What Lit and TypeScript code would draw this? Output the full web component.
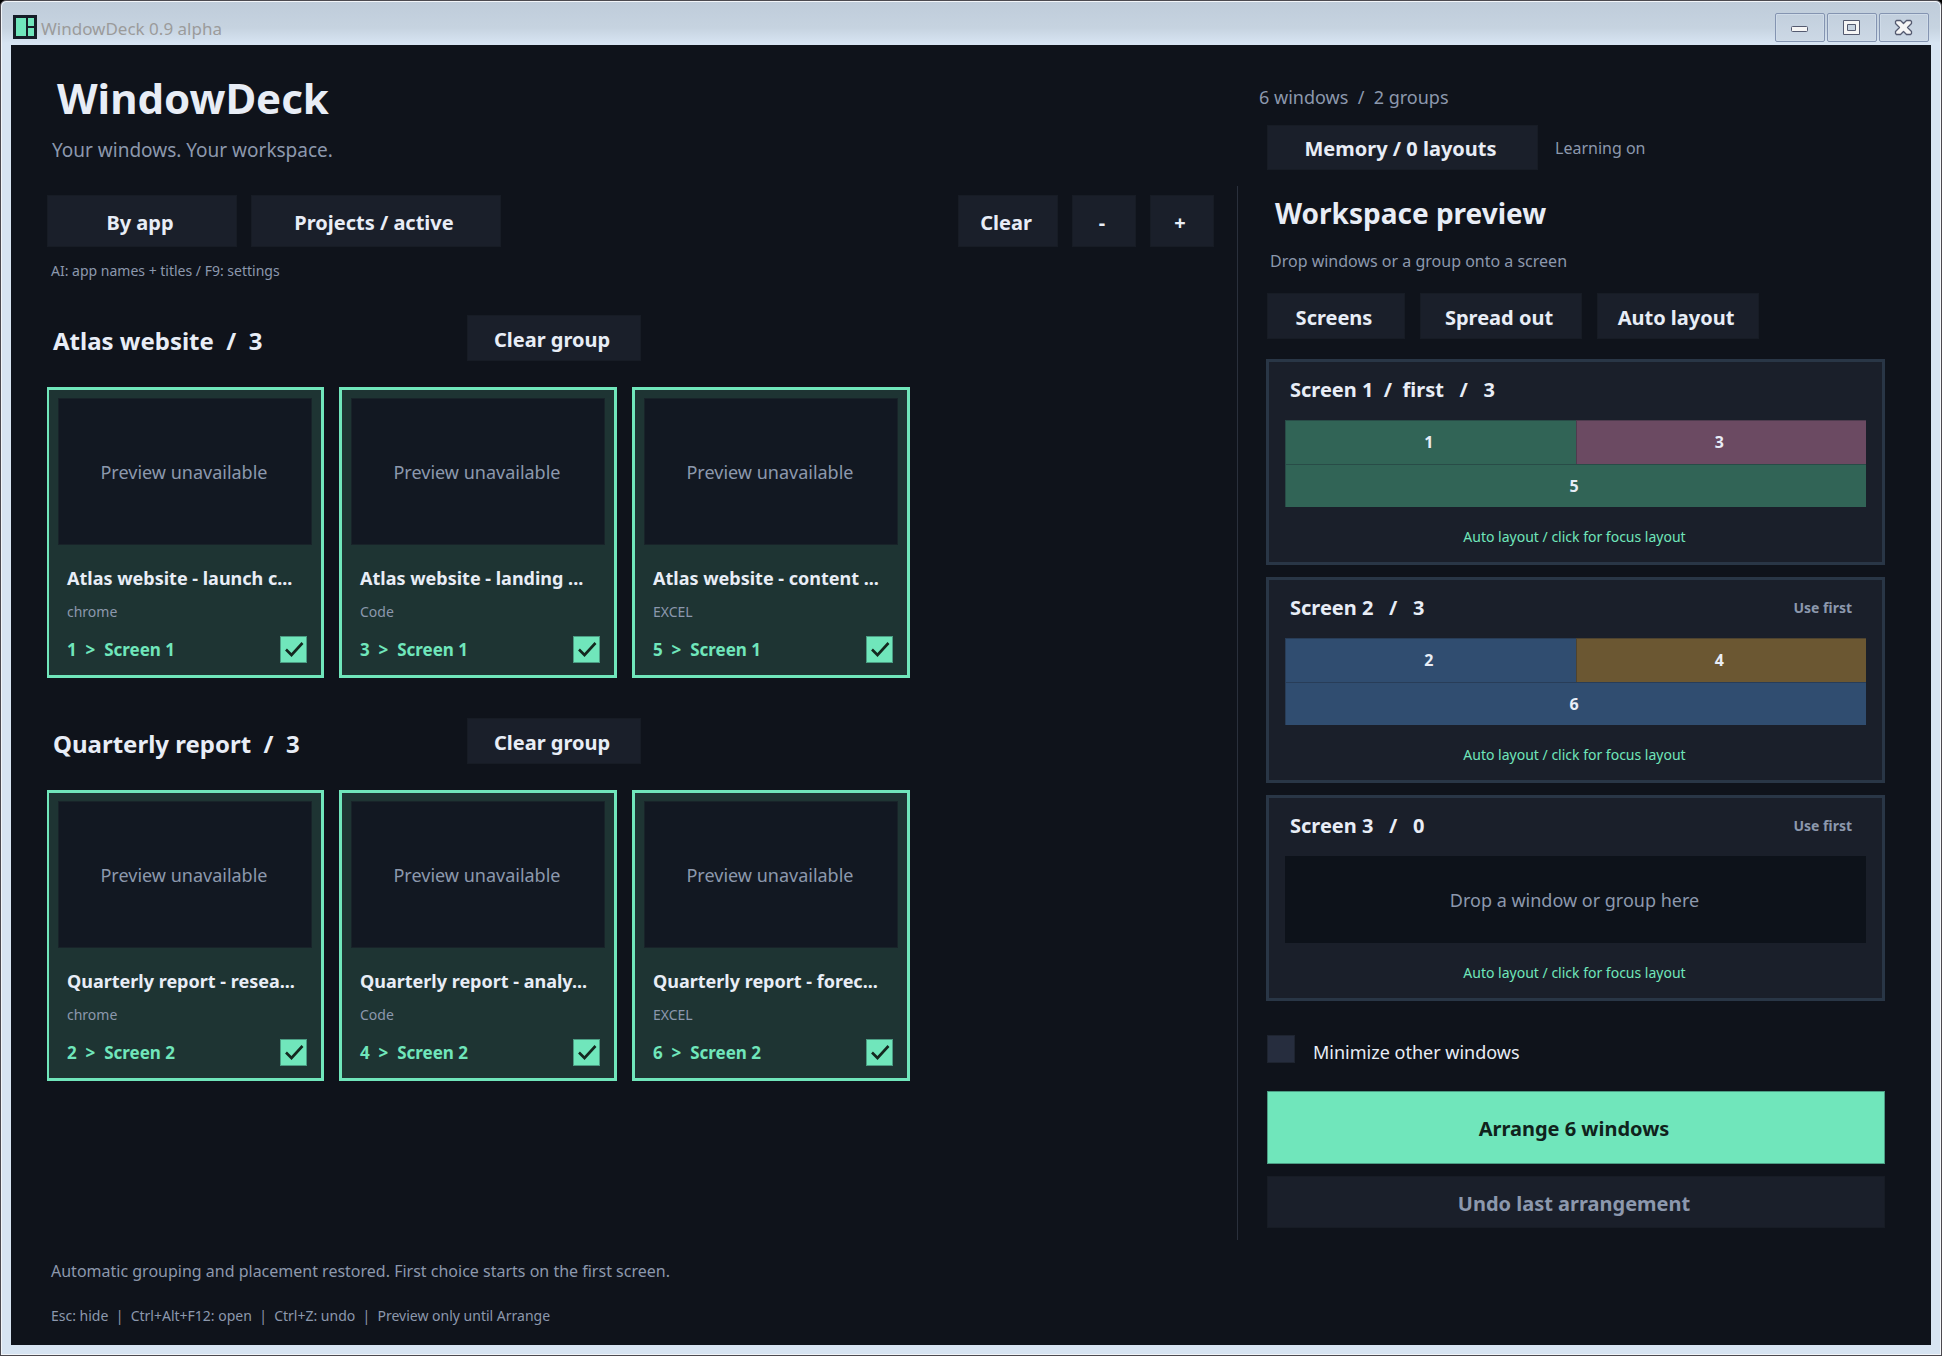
import { LitElement, html, css, nothing } from "lit";
import { customElement, property } from "lit/decorators.js";
import { classMap } from "lit/directives/class-map.js";

interface WindowCard {
  title: string;
  app: string;
  slot: number;
}

interface WindowGroup {
  name: string;
  screen: string;
  windows: WindowCard[];
}

interface Tile {
  slot: number;
  tone: "green" | "plum" | "blue" | "amber";
  wide?: boolean;
}

interface ScreenInfo {
  label: string;
  first: boolean;
  tiles: Tile[];
}

const GROUPS: WindowGroup[] = [
  {
    name: "Atlas website",
    screen: "Screen 1",
    windows: [
      { title: "Atlas website - launch c...", app: "chrome", slot: 1 },
      { title: "Atlas website - landing ...", app: "Code", slot: 3 },
      { title: "Atlas website - content ...", app: "EXCEL", slot: 5 },
    ],
  },
  {
    name: "Quarterly report",
    screen: "Screen 2",
    windows: [
      { title: "Quarterly report - resea...", app: "chrome", slot: 2 },
      { title: "Quarterly report - analy...", app: "Code", slot: 4 },
      { title: "Quarterly report - forec...", app: "EXCEL", slot: 6 },
    ],
  },
];

const SCREENS: ScreenInfo[] = [
  {
    label: "Screen 1  /  first   /   3",
    first: true,
    tiles: [
      { slot: 1, tone: "green" },
      { slot: 3, tone: "plum" },
      { slot: 5, tone: "green", wide: true },
    ],
  },
  {
    label: "Screen 2   /   3",
    first: false,
    tiles: [
      { slot: 2, tone: "blue" },
      { slot: 4, tone: "amber" },
      { slot: 6, tone: "blue", wide: true },
    ],
  },
  { label: "Screen 3   /   0", first: false, tiles: [] },
];

const controls = css`
  * {
    box-sizing: border-box;
  }
  h1,
  h2,
  h3,
  p {
    margin: 0;
  }
  button {
    margin: 0;
    border: 0;
    border-radius: 0;
    background: none;
    color: inherit;
    font: inherit;
    cursor: pointer;
  }
  .btn {
    padding: 3px 4px 0 0;
    border: 1px solid #171c25;
    background: #1a1f2a;
    color: #e8edf6;
    font-size: 20px;
    font-weight: 700;
    line-height: 28px;
    white-space: nowrap;
  }
  input[type="checkbox"] {
    appearance: none;
    margin: 0;
    border-radius: 0;
  }
`;

@customElement("title-bar")
export class TitleBar extends LitElement {
  static styles = [
    controls,
    css`
      :host {
        display: flex;
        align-items: flex-start;
        justify-content: space-between;
        height: 43px;
        padding: 11px 11px 0 11px;
        background: linear-gradient(#bfccda, #c6d3e0 60%, #d7e4f2 96%);
      }
      .brand {
        display: flex;
        align-items: center;
        gap: 4px;
        padding-top: 2px;
        color: #9b9b9b;
        font-size: 17px;
        line-height: 24px;
      }
      .logo {
        display: block;
        width: 24px;
        height: 24px;
      }
      .caption {
        padding-top: 3px;
        line-height: 21px;
      }
      .controls {
        display: flex;
        gap: 2px;
      }
      .control {
        display: grid;
        place-items: center;
        width: 50px;
        height: 29px;
        padding: 0;
        border: 1px solid #8494b1;
        border-radius: 2px;
        box-shadow: inset 0 0 0 1px #cfdbe8;
        background: linear-gradient(#c2cfdd, #ccd8e5);
      }
      .control svg {
        display: block;
        width: 20px;
        height: 18px;
      }
    `,
  ];

  render() {
    return html`
      <div class="brand">
        <svg class="logo" viewBox="0 0 24 24" aria-hidden="true">
          <rect width="24" height="24" fill="#151d27" />
          <path fill="#70e6bb" d="M3 3h10v18H3zM15 3h6v8h-6zM15 13h6v8h-6z" />
        </svg>
        <span class="caption">WindowDeck 0.9 alpha</span>
      </div>
      <div class="controls">
        <button class="control" aria-label="Minimize">
          <svg viewBox="0 0 20 18">
            <rect x="1.5" y="7.5" width="16" height="5" rx="1" fill="#f5f5f5" stroke="#545a70" />
          </svg>
        </button>
        <button class="control" aria-label="Maximize">
          <svg viewBox="0 0 20 18">
            <path
              fill="#f5f5f5"
              stroke="#545a70"
              fill-rule="evenodd"
              d="M1.5 1.500h16v14h-16zM5.500 5.500h8v6h-8z"
            />
          </svg>
        </button>
        <button class="control" aria-label="Close">
          <svg viewBox="0 0 20 18">
            <path
              fill="#f5f5f5"
              stroke="#545a70"
              stroke-width="1.300"
              stroke-linejoin="round"
              d="M2.500 1.500H6.500L9.500 4.500 12.500 1.500H16.500L17.500 2.500V4.500L13.500 8.500 17.500 12.500V14.500L16.500 15.500H12.500L9.500 12.500 6.500 15.500H2.500L1.500 14.500V12.500L5.500 8.500 1.500 4.500V2.500Z"
            />
          </svg>
        </button>
      </div>
    `;
  }
}

@customElement("window-card")
export class WindowCardElement extends LitElement {
  @property({ attribute: false }) item!: WindowCard;
  @property() screen = "";

  static styles = [
    controls,
    css`
      :host {
        display: block;
        flex: 0 0 278px;
        padding: 8px 9px 12px;
        border: 3px solid #70e6bb;
        background: #1e3433;
      }
      .preview {
        display: grid;
        place-items: center;
        height: 147px;
        padding-right: 2px;
        border: 1px solid #182329;
        background: #121822;
        color: #8c98ad;
        font-size: 18px;
        line-height: 24px;
      }
      .body {
        padding: 21px 5px 0 9px;
      }
      .title {
        color: #e8edf6;
        font-size: 18px;
        font-weight: 700;
        line-height: 24px;
        white-space: nowrap;
      }
      .app {
        padding-top: 12px;
        color: #8c98ad;
        font-size: 14px;
        line-height: 20px;
      }
      .target {
        display: flex;
        align-items: center;
        justify-content: space-between;
        padding-top: 14px;
        color: #70e6bb;
        font-size: 17px;
        font-weight: 700;
        line-height: 24px;
        white-space: pre;
      }
      .tick {
        display: grid;
      }
      .tick > * {
        grid-area: 1 / 1;
        width: 27px;
        height: 27px;
      }
      .tick input {
        border: 1px solid #4b9c83;
        background: #1e3433;
      }
      .tick input:checked {
        background: #70e6bb;
      }
      .tick svg {
        visibility: hidden;
        pointer-events: none;
      }
      .tick input:checked + svg {
        visibility: visible;
      }
    `,
  ];

  render() {
    const { title, app, slot } = this.item;
    return html`
      <div class="preview">Preview unavailable</div>
      <div class="body">
        <h3 class="title">${title}</h3>
        <p class="app">${app}</p>
        <div class="target">
          <label for="pick">${slot + "  >  " + this.screen}</label>
          <span class="tick">
            <input id="pick" type="checkbox" checked />
            <svg viewBox="0 0 27 27" aria-hidden="true">
              <path d="M6 13.500 11.500 19 22.500 7" fill="none" stroke="#14281f" stroke-width="2.600" />
            </svg>
          </span>
        </div>
      </div>
    `;
  }
}

@customElement("screen-panel")
export class ScreenPanel extends LitElement {
  @property({ attribute: false }) info!: ScreenInfo;

  static styles = [
    controls,
    css`
      :host {
        display: block;
        padding: 14px 16px 15px;
        border: 3px solid #293646;
        background: #1a1f2a;
      }
      .head {
        display: flex;
        align-items: center;
        justify-content: space-between;
        padding: 0 14px 0 5px;
      }
      .name {
        color: #e8edf6;
        font-size: 20px;
        font-weight: 700;
        line-height: 28px;
        white-space: pre;
      }
      .use {
        padding: 0;
        color: #8c98ad;
        font-size: 14px;
        font-weight: 700;
        line-height: 20px;
      }
      .stage {
        display: grid;
        grid-template-columns: 1fr 1fr;
        grid-template-rows: 1fr 1fr;
        height: 87px;
        margin: 16px 0 20px;
      }
      .tile {
        display: grid;
        place-items: center;
        padding-right: 4px;
        border: solid rgba(26, 31, 42, 0.35);
        border-width: 1px 0 0 1px;
        color: #e8edf6;
        font-size: 16px;
        font-weight: 700;
        line-height: 24px;
      }
      .wide {
        grid-column: 1 / -1;
      }
      .green {
        background: #316456;
      }
      .plum {
        background: #6b4a62;
      }
      .blue {
        background: #304d70;
      }
      .amber {
        background: #6b5732;
      }
      .empty {
        display: grid;
        place-items: center;
        height: 87px;
        margin: 16px 0 20px;
        padding-right: 2px;
        background: #0d121a;
        color: #8c98ad;
        font-size: 18px;
        line-height: 24px;
      }
      .mode {
        display: block;
        width: 100%;
        padding: 0 2px 0 0;
        color: #70e6bb;
        font-size: 14px;
        line-height: 20px;
      }
    `,
  ];

  render() {
    const { label, first, tiles } = this.info;
    return html`
      <div class="head">
        <h3 class="name">${label}</h3>
        ${first ? nothing : html`<button class="use">Use first</button>`}
      </div>
      ${tiles.length
        ? html`<div class="stage">
            ${tiles.map(
              (t) => html`<div class=${classMap({ tile: true, [t.tone]: true, wide: !!t.wide })}>${t.slot}</div>`
            )}
          </div>`
        : html`<div class="empty">Drop a window or group here</div>`}
      <button class="mode">Auto layout / click for focus layout</button>
    `;
  }
}

@customElement("app-root")
export class AppRoot extends LitElement {
  static styles = [
    controls,
    css`
      :host {
        display: block;
        background: #000;
        font-family: "Noto Sans", "Open Sans", sans-serif;
      }
      .frame {
        display: flex;
        flex-direction: column;
        min-height: 100vh;
        padding: 0 10px 10px;
        border: 1px solid #4c4a50;
        border-radius: 6px 6px 0 0;
        box-shadow: inset 0 0 0 1px #f2f5f9;
        background: #d7e4f2;
      }
      title-bar {
        margin: 1px -9px 0;
        border-radius: 5px 5px 0 0;
      }
      .client {
        display: flex;
        flex: 1;
        flex-direction: column;
        background: #0f131b;
        color: #8c98ad;
      }
      .main {
        display: grid;
        flex: 1;
        grid-template-columns: minmax(0, 23fr) 1px minmax(0, 13fr);
      }
      .library {
        padding: 29px 23px 0 36px;
      }
      .brand {
        padding-left: 10px;
        color: #e8edf6;
        font-size: 42px;
        font-weight: 700;
        line-height: 48px;
      }
      .tagline {
        padding: 16px 0 0 5px;
        font-size: 19px;
        line-height: 24px;
      }
      .toolbar {
        display: flex;
        flex-wrap: wrap;
        gap: 14px;
        padding-top: 33px;
      }
      .toolbar .btn {
        height: 52px;
      }
      .by-app {
        width: 190px;
      }
      .projects {
        width: 250px;
      }
      .clear {
        width: 100px;
        margin-left: auto;
      }
      .zoom {
        width: 64px;
      }
      .note {
        padding: 14px 0 0 4px;
        font-size: 14px;
        line-height: 20px;
      }
      .groups {
        display: grid;
        gap: 40px;
        padding-top: 34px;
        overflow: hidden;
      }
      .group-head {
        display: grid;
        grid-template-columns: 420px 174px;
        align-items: center;
      }
      .group-head .btn {
        height: 46px;
      }
      .group-name {
        padding: 6px 0 0 6px;
        color: #e8edf6;
        font-size: 24px;
        font-weight: 700;
        line-height: 32px;
        white-space: pre;
      }
      .cards {
        display: flex;
        flex-wrap: wrap;
        gap: 15px;
        margin: 26px 0 0 -1px;
      }
      .divider {
        margin-top: 141px;
        background: #2a303c;
      }
      .workspace {
        padding: 40px 46px 12px 29px;
      }
      .count {
        margin-left: -8px;
        font-size: 18px;
        line-height: 24px;
        white-space: pre;
      }
      .memory {
        display: flex;
        align-items: center;
        gap: 17px;
        padding-top: 16px;
        font-size: 16px;
        line-height: 22px;
      }
      .memory .btn {
        width: 271px;
        height: 45px;
      }
      .heading {
        padding: 25px 0 0 8px;
        color: #e8edf6;
        font-size: 28px;
        font-weight: 700;
        line-height: 36px;
      }
      .hint {
        padding: 19px 0 0 3px;
        font-size: 16px;
        line-height: 22px;
      }
      .modes {
        display: flex;
        flex-wrap: wrap;
        gap: 15px;
        padding-top: 21px;
      }
      .modes .btn {
        width: 162px;
        height: 46px;
      }
      .modes .screens {
        width: 138px;
      }
      .screen-list {
        display: grid;
        gap: 12px;
        margin: 20px 0 0 -1px;
      }
      .minimize {
        display: flex;
        align-items: center;
        gap: 18px;
        margin-top: 34px;
        color: #e8edf6;
        font-size: 18px;
        line-height: 22px;
      }
      .minimize input {
        width: 28px;
        height: 28px;
        border: 1px solid #1e2430;
        background: #262d3e;
      }
      .minimize input:checked {
        background: #70e6bb;
      }
      .minimize label {
        padding-top: 6px;
      }
      .arrange {
        display: block;
        width: 100%;
        height: 73px;
        margin-top: 28px;
        border-color: #4b9c83;
        background: #70e6bb;
        color: #10231c;
      }
      .undo {
        display: block;
        width: 100%;
        height: 52px;
        margin-top: 12px;
        color: #8c98ad;
      }
      .status {
        display: grid;
        gap: 24px;
        padding: 20px 40px 19px;
        font-size: 16px;
        line-height: 22px;
      }
      .keys {
        font-size: 14px;
        line-height: 20px;
        white-space: pre-wrap;
      }
    `,
  ];

  private renderGroup(group: WindowGroup) {
    return html`
      <section>
        <div class="group-head">
          <h2 class="group-name">${group.name + "  /  " + group.windows.length}</h2>
          <button class="btn">Clear group</button>
        </div>
        <div class="cards">
          ${group.windows.map((w) => html`<window-card .item=${w} .screen=${group.screen}></window-card>`)}
        </div>
      </section>
    `;
  }

  render() {
    return html`
      <div class="frame">
        <title-bar></title-bar>
        <div class="client">
          <div class="main">
            <main class="library">
              <h1 class="brand">WindowDeck</h1>
              <p class="tagline">Your windows. Your workspace.</p>
              <div class="toolbar">
                <button class="btn by-app">By app</button>
                <button class="btn projects">Projects / active</button>
                <button class="btn clear">Clear</button>
                <button class="btn zoom">-</button>
                <button class="btn zoom">+</button>
              </div>
              <p class="note">AI: app names + titles / F9: settings</p>
              <div class="groups">${GROUPS.map((g) => this.renderGroup(g))}</div>
            </main>
            <div class="divider"></div>
            <aside class="workspace">
              <p class="count">${"6 windows  /  2 groups"}</p>
              <div class="memory">
                <button class="btn">Memory / 0 layouts</button>
                <span>Learning on</span>
              </div>
              <h2 class="heading">Workspace preview</h2>
              <p class="hint">Drop windows or a group onto a screen</p>
              <div class="modes">
                <button class="btn screens">Screens</button>
                <button class="btn">Spread out</button>
                <button class="btn">Auto layout</button>
              </div>
              <div class="screen-list">
                ${SCREENS.map((s) => html`<screen-panel .info=${s}></screen-panel>`)}
              </div>
              <div class="minimize">
                <input id="minimize" type="checkbox" />
                <label for="minimize">Minimize other windows</label>
              </div>
              <button class="btn arrange">Arrange 6 windows</button>
              <button class="btn undo">Undo last arrangement</button>
            </aside>
          </div>
          <footer class="status">
            <p>Automatic grouping and placement restored. First choice starts on the first screen.</p>
            <p class="keys">${"Esc: hide  |  Ctrl+Alt+F12: open  |  Ctrl+Z: undo  |  Preview only until Arrange"}</p>
          </footer>
        </div>
      </div>
    `;
  }
}
